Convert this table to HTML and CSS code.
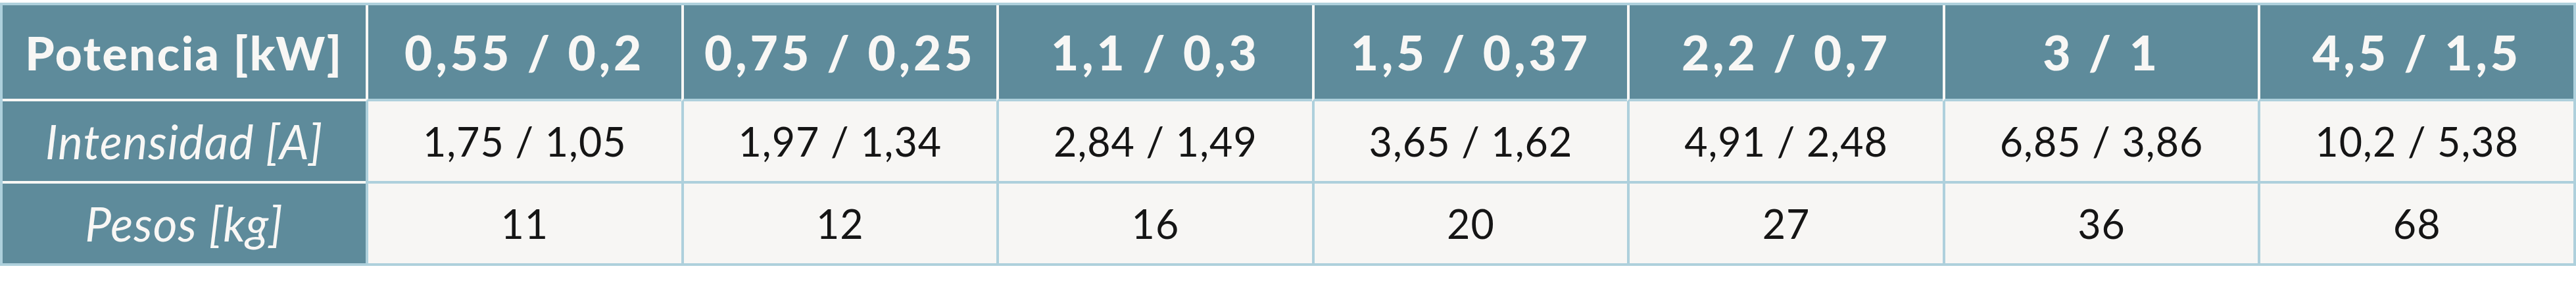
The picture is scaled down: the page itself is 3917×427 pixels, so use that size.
FILE: index.html
```html
<!DOCTYPE html>
<html lang="es">
<head>
<meta charset="utf-8">
<title>Tabla de potencias</title>
<link rel="stylesheet" href="styles.css">
</head>
<body>
<table class="spec">
  <thead>
    <tr class="row-head">
      <th class="label label-head">Potencia [kW]</th>
      <th class="head">0,55 / 0,2</th>
      <th class="head">0,75 / 0,25</th>
      <th class="head">1,1 / 0,3</th>
      <th class="head">1,5 / 0,37</th>
      <th class="head">2,2 / 0,7</th>
      <th class="head">3 / 1</th>
      <th class="head">4,5 / 1,5</th>
    </tr>
  </thead>
  <tbody>
    <tr class="row-mid">
      <th class="label">Intensidad [A]</th>
      <td class="cell">1,75 / 1,05</td>
      <td class="cell">1,97 / 1,34</td>
      <td class="cell">2,84 / 1,49</td>
      <td class="cell">3,65 / 1,62</td>
      <td class="cell">4,91 / 2,48</td>
      <td class="cell">6,85 / 3,86</td>
      <td class="cell">10,2 / 5,38</td>
    </tr>
    <tr class="row-last">
      <th class="label">Pesos [kg]</th>
      <td class="cell">11</td>
      <td class="cell">12</td>
      <td class="cell">16</td>
      <td class="cell">20</td>
      <td class="cell">27</td>
      <td class="cell">36</td>
      <td class="cell">68</td>
    </tr>
  </tbody>
</table>
</body>
</html>
```
FILE: styles.css
```css
html, body {
  margin: 0;
  padding: 0;
  background: #ffffff;
}
body {
  padding-top: 4px;
}
.spec {
  width: 3917px;
  table-layout: fixed;
  border-collapse: separate;
  border-spacing: 0;
  border: 4px solid #aed0dc;
  font-family: Lato, "Open Sans", sans-serif;
}
.spec th,
.spec td {
  box-sizing: border-box;
  padding: 0;
  text-align: center;
  vertical-align: middle;
  white-space: nowrap;
}
.label {
  width: 552px;
  background: #5e8b9b;
  color: #f8f7f5;
  font-style: italic;
  font-weight: 400;
  font-size: 71px;
  letter-spacing: 1px;
}
.label-head {
  font-style: normal;
  font-weight: 900;
  letter-spacing: 2.5px;
}
.head {
  background: #5e8b9b;
  color: #f8f7f5;
  font-weight: 900;
  font-size: 73px;
  letter-spacing: 5px;
  border-left: 4px solid #f8f7f5;
  border-bottom: 4px solid #aed0dc;
}
.row-head .label {
  border-bottom: 4px solid #f8f7f5;
}
.row-head th {
  height: 146px;
}
.row-mid th,
.row-mid td {
  height: 125px;
}
.row-mid .label {
  border-bottom: 4px solid #f8f7f5;
}
.row-last th,
.row-last td {
  height: 121px;
}
.cell {
  background: #f7f6f4;
  color: #151515;
  font-size: 61px;
  letter-spacing: 1px;
  border-left: 4px solid #aed0dc;
}
.row-mid .cell {
  border-bottom: 4px solid #aed0dc;
}
```
